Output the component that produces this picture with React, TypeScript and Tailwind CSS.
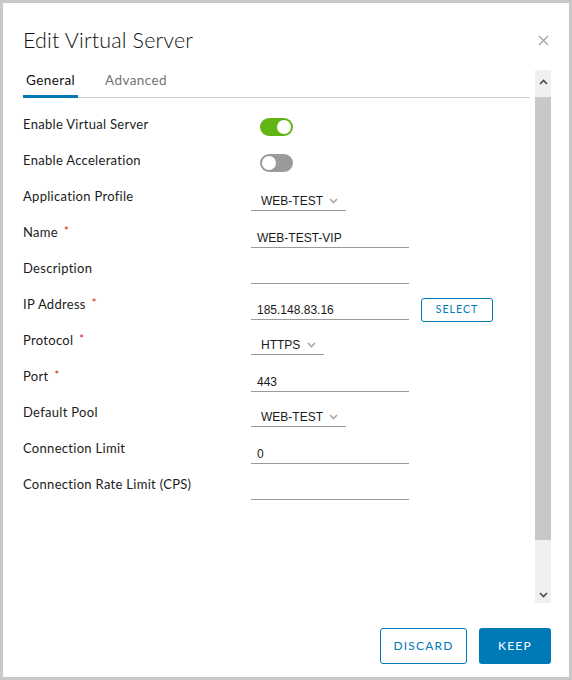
import React from 'react';

type Field =
  | { kind: 'toggle'; label: string; on: boolean }
  | { kind: 'select'; label: string; value: string; width: string; required?: boolean }
  | { kind: 'input'; label: string; value: string; required?: boolean; action?: string };

const fields: Field[] = [
  { kind: 'toggle', label: 'Enable Virtual Server', on: true },
  { kind: 'toggle', label: 'Enable Acceleration', on: false },
  { kind: 'select', label: 'Application Profile', value: 'WEB-TEST', width: 'w-[95px]' },
  { kind: 'input', label: 'Name', value: 'WEB-TEST-VIP', required: true },
  { kind: 'input', label: 'Description', value: '' },
  { kind: 'input', label: 'IP Address', value: '185.148.83.16', required: true, action: 'SELECT' },
  { kind: 'select', label: 'Protocol', value: 'HTTPS', width: 'w-[73px]', required: true },
  { kind: 'input', label: 'Port', value: '443', required: true },
  { kind: 'select', label: 'Default Pool', value: 'WEB-TEST', width: 'w-[95px]' },
  { kind: 'input', label: 'Connection Limit', value: '0' },
  { kind: 'input', label: 'Connection Rate Limit (CPS)', value: '' },
];

const labelFont = "font-['Lato','Noto_Sans',sans-serif]";
const valueFont = "font-['Liberation_Sans','Arial',sans-serif]";

function Chevron({ up = false, className = '' }: { up?: boolean; className?: string }) {
  return (
    <svg width="9" height="6" viewBox="0 0 9 6" className={className}>
      <polyline
        points={up ? '1,5 4.5,1.5 8,5' : '1,1 4.5,4.5 8,1'}
        fill="none"
        stroke="currentColor"
        strokeWidth="1.6"
      />
    </svg>
  );
}

function Toggle({ on }: { on: boolean }) {
  return (
    <div
      className={`ml-[9px] mt-[12px] flex h-[18px] w-[33px] items-center rounded-full p-[2px] ${
        on ? 'justify-end bg-[#60b515]' : 'justify-start bg-[#9a9a9a]'
      }`}
    >
      <div className="h-[14px] w-[14px] rounded-full bg-white" />
    </div>
  );
}

function Control({ field }: { field: Field }) {
  if (field.kind === 'toggle') return <Toggle on={field.on} />;
  if (field.kind === 'select') {
    return (
      <div
        className={`mt-[14px] flex h-[19px] ${field.width} items-center justify-between border-b border-[#9a9a9a] pl-[10px] pr-[8px] text-[12px] text-[#1a1a1a] ${valueFont}`}
      >
        <span>{field.value}</span>
        <Chevron className="text-[#a8a8a8]" />
      </div>
    );
  }
  return (
    <div className="flex items-start gap-3">
      <div
        className={`mt-[14px] flex h-[20px] w-[158px] items-center border-b border-[#9a9a9a] px-[6px] text-[12px] text-[#1a1a1a] ${valueFont}`}
      >
        {field.value}
      </div>
      {field.action && (
        <button
          className={`mt-[12px] flex h-[24px] w-[72px] items-center justify-center rounded-[3px] border border-[#0079b8] text-[10.5px] tracking-[1px] text-[#0079b8] ${labelFont}`}
        >
          {field.action}
        </button>
      )}
    </div>
  );
}

export default function App() {
  return (
    <div className="flex h-[680px] w-[572px] flex-col border-[3px] border-[#c8c8c8] bg-white">
      <div className="flex h-[67px] items-start justify-between pl-[20px] pr-[20px] pt-[23px]">
        <h1 className={`text-[21.5px] font-light leading-[28px] tracking-[0.15px] text-[#111] ${labelFont}`}>
          Edit Virtual Server
        </h1>
        <svg width="11" height="11" viewBox="0 0 11 11" className="mt-[9px]">
          <path d="M1 1 L10 10 M10 1 L1 10" stroke="#9aa3ad" strokeWidth="1.3" />
        </svg>
      </div>

      <div className="flex flex-1 gap-[5px] pl-[20px] pr-[18px]">
        <div className="flex-1">
          <div className={`flex h-[28px] border-b border-[#cccccc] text-[13.5px] tracking-[0.4px] ${labelFont}`}>
            <div className="-mb-px border-b-[3px] border-[#0079b8] px-[3px] pt-[2px] leading-[16px] text-[#111]">
              General
            </div>
            <div className="ml-[24px] px-[3px] pt-[2px] leading-[16px] text-[#737373]">Advanced</div>
          </div>
          <div className="mt-[8px]">
            {fields.map((field) => (
              <div key={field.label} className="flex h-9 items-start">
                <div
                  className={`mt-[10px] w-[228px] text-[13px] leading-[16px] tracking-[0.3px] text-[#1b1b1b] ${labelFont}`}
                >
                  {field.label}
                  {'required' in field && field.required && (
                    <span className="relative -top-[2px] ml-[6px] text-[11px] text-[#c92100]">*</span>
                  )}
                </div>
                <Control field={field} />
              </div>
            ))}
          </div>
        </div>
        <div className="flex w-[16px] flex-col bg-[#f0f0f0] text-[#4d4d4d]">
          <div className="flex h-[27px] justify-center pt-[9px]">
            <Chevron up />
          </div>
          <div className="h-[443px] bg-[#c8c8c8]" />
          <div className="flex-1" />
          <div className="flex h-[20px] items-end justify-center pb-[5px]">
            <Chevron />
          </div>
        </div>
      </div>

      <div className={`flex justify-end gap-3 pb-[13px] pr-[18px] pt-[25px] text-[12px] tracking-[1.2px] ${labelFont}`}>
        <button className="flex h-9 w-[87px] items-center justify-center rounded-[3px] border border-[#0079b8] text-[#0079b8]">
          DISCARD
        </button>
        <button className="flex h-9 w-[72px] items-center justify-center rounded-[3px] bg-[#0079b8] text-white">
          KEEP
        </button>
      </div>
    </div>
  );
}
